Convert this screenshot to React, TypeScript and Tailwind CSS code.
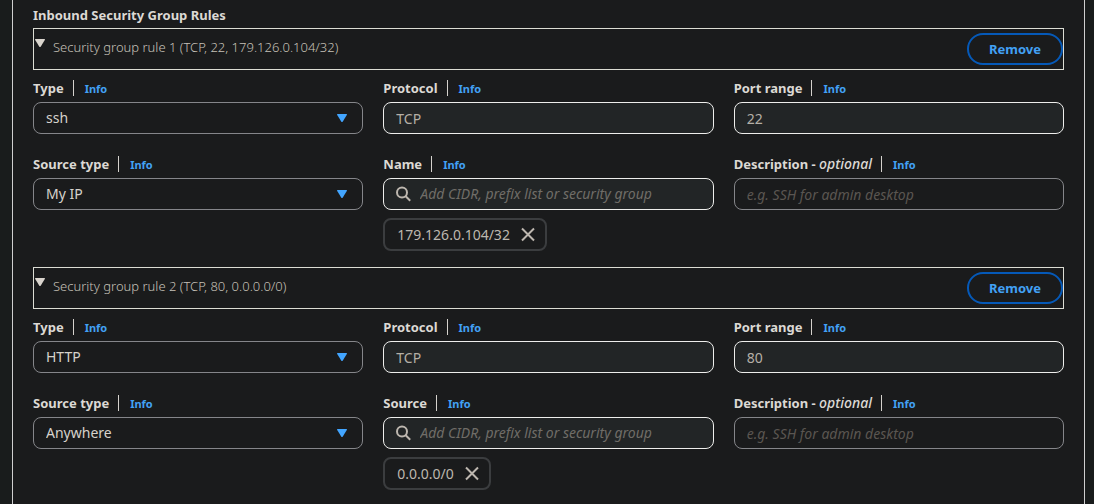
import { useId, useState } from "react";
import type { ReactNode } from "react";

type Rule = {
  type: string;
  protocol: string;
  port: string;
  sourceType: string;
  sourceLabel: string;
  cidr: string;
};

const initialRules: Rule[] = [
  { type: "ssh", protocol: "TCP", port: "22", sourceType: "My IP", sourceLabel: "Name", cidr: "179.126.0.104/32" },
  { type: "HTTP", protocol: "TCP", port: "80", sourceType: "Anywhere", sourceLabel: "Source", cidr: "0.0.0.0/0" },
];

function Triangle({ className }: { className: string }) {
  return (
    <svg viewBox="0 0 10 8" className={`h-2 w-2.5 shrink-0 ${className}`} fill="currentColor" aria-hidden="true">
      <path d="M0.6 0H9.4Q10.3 0 9.8 0.9L5.8 7.5Q5 8.5 4.2 7.5L0.2 0.9Q-0.3 0 0.6 0Z" />
    </svg>
  );
}

function Field({ id, label, children }: { id: string; label: ReactNode; children: ReactNode }) {
  return (
    <div className="min-w-0">
      <div className="mb-1 flex h-5 items-baseline">
        <label htmlFor={id} className="text-[13px] leading-5 font-bold whitespace-nowrap text-[#dcd9d4]">
          {label}
        </label>
        <span className="mr-[11px] ml-[9px] h-4 w-px self-center bg-[#d5d2cd]" />
        <a href="#info" className="text-[11px] leading-4 font-bold text-[#42a1f5]">
          Info
        </a>
      </div>
      {children}
    </div>
  );
}

function SelectBox({ id, value, options }: { id: string; value: string; options: string[] }) {
  return (
    <div className="relative">
      <select
        id={id}
        defaultValue={value}
        className="block h-8 w-full appearance-none rounded-lg border border-[#85868a] bg-[#1a1b1c] pr-9 pl-3 text-sm text-[#d6d2cb]"
      >
        {options.map((option) => (
          <option key={option}>{option}</option>
        ))}
      </select>
      <div className="pointer-events-none absolute inset-y-0 right-4 flex items-center">
        <Triangle className="text-[#42a5ff]" />
      </div>
    </div>
  );
}

function ReadOnlyBox({ id, value }: { id: string; value: string }) {
  return (
    <input
      id={id}
      readOnly
      value={value}
      className="block h-8 w-full rounded-lg border border-[#eeeeec] bg-[#222526] px-3 text-sm text-[#b5afa6]"
    />
  );
}

function RuleSection({ rule, index, onRemove }: { rule: Rule; index: number; onRemove: () => void }) {
  const id = useId();
  const [open, setOpen] = useState(true);
  const [hasToken, setHasToken] = useState(true);

  return (
    <section className="mb-4">
      <div className="flex items-start justify-between border border-[#dcddd4] py-1">
        <button
          type="button"
          aria-expanded={open}
          onClick={() => setOpen(!open)}
          className="flex items-start gap-2 pt-1 pl-px text-[13px] leading-5 font-light text-[#c6c1b8]"
        >
          <Triangle className="mt-0.5 text-[#d9d4cd]" />
          Security group rule {index + 1} (TCP, {rule.port}, {rule.cidr})
        </button>
        <button
          type="button"
          onClick={onRemove}
          className="h-8 rounded-full border-2 border-[#0559b8] px-5 pt-px text-[13px] font-bold text-[#42a1f5]"
        >
          Remove
        </button>
      </div>
      {open && (
        <div className="mt-2 grid grid-cols-3 gap-5">
          <Field id={`${id}-type`} label="Type">
            <SelectBox id={`${id}-type`} value={rule.type} options={["ssh", "HTTP"]} />
          </Field>
          <Field id={`${id}-protocol`} label="Protocol">
            <ReadOnlyBox id={`${id}-protocol`} value={rule.protocol} />
          </Field>
          <Field id={`${id}-port`} label="Port range">
            <ReadOnlyBox id={`${id}-port`} value={rule.port} />
          </Field>
          <Field id={`${id}-source-type`} label="Source type">
            <SelectBox id={`${id}-source-type`} value={rule.sourceType} options={["My IP", "Anywhere"]} />
          </Field>
          <Field id={`${id}-source`} label={rule.sourceLabel}>
            <div className="flex h-8 items-center gap-2 rounded-lg border border-[#eeeeec] bg-[#222526] px-3">
              <svg viewBox="0 0 16 16" className="size-4 shrink-0 text-[#bdb7af]" fill="none" stroke="currentColor" strokeWidth="2" aria-hidden="true">
                <circle cx="6" cy="6.5" r="5" />
                <path d="M9.7 10.2L14.2 14.7" />
              </svg>
              <input
                id={`${id}-source`}
                placeholder="Add CIDR, prefix list or security group"
                className="min-w-0 flex-1 bg-transparent text-sm text-[#d6d2cb] outline-none placeholder:text-[#706d68] placeholder:italic"
              />
            </div>
            {hasToken && (
              <div className="mt-2 flex h-[33px] w-fit items-center gap-[10px] rounded-lg border-2 border-[#3b3d3f] pr-[9px] pl-3 text-sm text-[#bdb7af]">
                {rule.cidr}
                <button type="button" aria-label={`Remove ${rule.cidr}`} onClick={() => setHasToken(false)}>
                  <svg viewBox="0 0 16 16" className="size-4" fill="none" stroke="currentColor" strokeWidth="2" aria-hidden="true">
                    <path d="M2 1.5L14 13.5M14 1.5L2 13.5" />
                  </svg>
                </button>
              </div>
            )}
          </Field>
          <Field
            id={`${id}-description`}
            label={
              <>
                Description - <em className="text-sm leading-5 font-medium">optional</em>
              </>
            }
          >
            <input
              id={`${id}-description`}
              placeholder="e.g. SSH for admin desktop"
              className="block h-8 w-full rounded-lg border border-[#85868a] bg-[#1a1b1c] px-3 text-sm text-[#d6d2cb] placeholder:text-[#5a5651] placeholder:italic"
            />
          </Field>
        </div>
      )}
    </section>
  );
}

export default function App() {
  const [rules, setRules] = useState(initialRules);

  return (
    <main className="flex min-h-screen flex-col bg-[#191c1c] pr-[9px] pl-3 font-['Noto_Sans',sans-serif]">
      <div className="flex-1 border-x border-[#cfcfcf] bg-[#1a1b1c] px-5 pt-[5px]">
        <h2 className="mb-[3px] text-[13px] leading-5 font-bold text-[#dcd9d4]">Inbound Security Group Rules</h2>
        {rules.map((rule, index) => (
          <RuleSection
            key={rule.cidr}
            rule={rule}
            index={index}
            onRemove={() => setRules(rules.filter((other) => other !== rule))}
          />
        ))}
      </div>
    </main>
  );
}
